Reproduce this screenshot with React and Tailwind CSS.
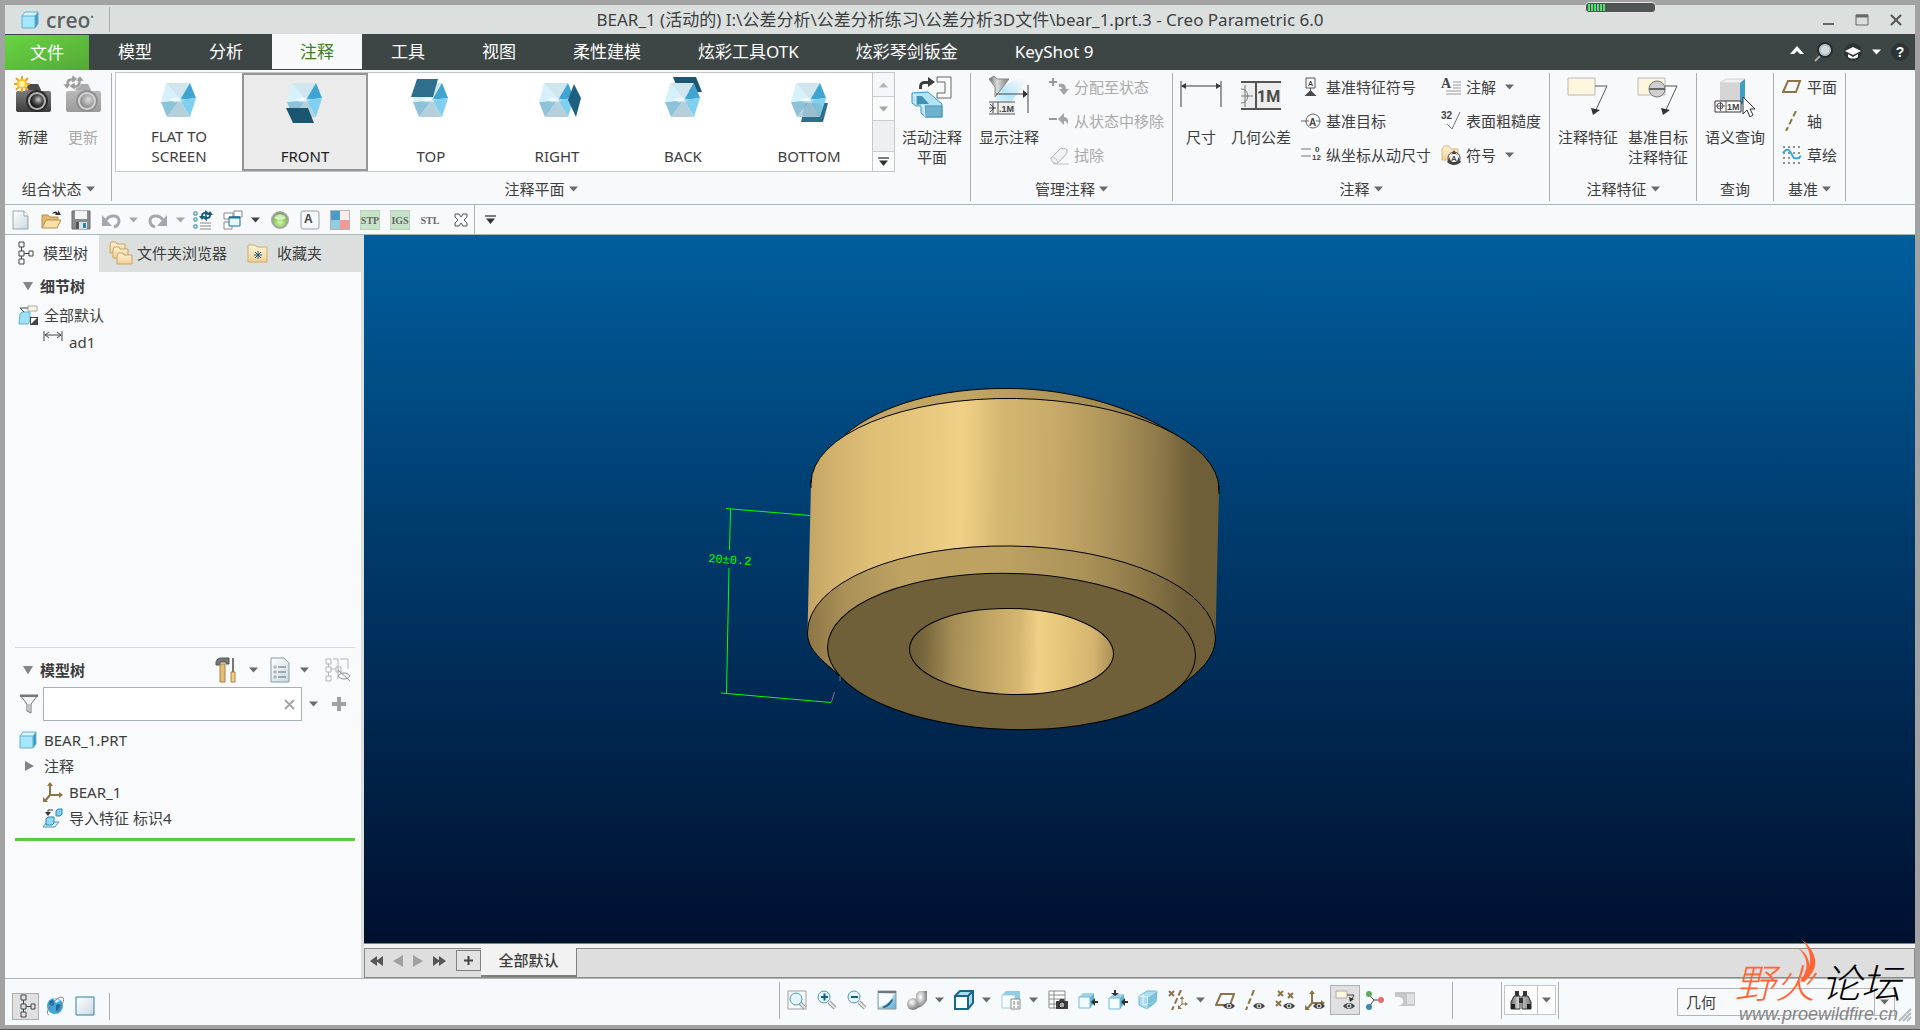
import React, { useState } from 'react';

/* ---------- small shared pieces ---------- */

const Svg = ({ w = 20, h = w, children, className = '' }) => (
  <svg width={w} height={h} viewBox={`0 0 ${w} ${h}`} fill="none" className={`shrink-0 ${className}`} aria-hidden="true">
    {children}
  </svg>
);

const Caret = ({ color = '#6b6b6b' }) => (
  <Svg w={9} h={6}><path d="M0 0.5h9L4.5 5.5z" fill={color} /></Svg>
);

const BarCaret = () => (
  <Svg w={11} h={9}><path d="M0 0h11v2H0z" fill="#7b7b7b" /><path d="M1 3.5h9L5.500 9z" fill="#333" /></Svg>
);

const IconButton = ({ label, children, className = '' }) => (
  <button aria-label={label} className={`flex shrink-0 items-center justify-center ${className}`}>{children}</button>
);

const Defs = () => (
  <svg width="0" height="0" className="absolute" aria-hidden="true">
    <defs>
      <linearGradient id="cam" x1="0" y1="0" x2="0" y2="1"><stop stopColor="#8a8a8a" /><stop offset="0.5" stopColor="#666" /><stop offset="1" stopColor="#3c3c3c" /></linearGradient>
      <linearGradient id="camOff" x1="0" y1="0" x2="0" y2="1"><stop stopColor="#c4c4c4" /><stop offset="1" stopColor="#9a9a9a" /></linearGradient>
      <radialGradient id="lens" cx="0.6" cy="0.4" r="0.6"><stop stopColor="#ccc" /><stop offset="0.5" stopColor="#555" /><stop offset="1" stopColor="#111" /></radialGradient>
      <radialGradient id="lensOff" cx="0.6" cy="0.4" r="0.6"><stop stopColor="#ddd" /><stop offset="0.6" stopColor="#aaa" /><stop offset="1" stopColor="#888" /></radialGradient>
      <radialGradient id="glow"><stop stopColor="#fff" /><stop offset="1" stopColor="#fff" stopOpacity="0" /></radialGradient>
      <radialGradient id="ball" cx="0.5" cy="0.65" r="0.6"><stop stopColor="#d6f5b0" /><stop offset="0.6" stopColor="#8fcf5e" /><stop offset="1" stopColor="#5f9a3a" /></radialGradient>
      <linearGradient id="metal" x1="0" y1="0" x2="1" y2="0"><stop stopColor="#666" /><stop offset="0.4" stopColor="#ddd" /><stop offset="1" stopColor="#777" /></linearGradient>
      <linearGradient id="folder" x1="0" y1="0" x2="0" y2="1"><stop stopColor="#fdf3d8" /><stop offset="1" stopColor="#f0cf94" /></linearGradient>
      <linearGradient id="paper" x1="0" y1="0" x2="1" y2="1"><stop stopColor="#fff" /><stop offset="1" stopColor="#c9d8e2" /></linearGradient>
      <linearGradient id="sky" x1="0" y1="0" x2="1" y2="1"><stop stopColor="#f2fafd" /><stop offset="1" stopColor="#5fb0d0" /></linearGradient>
      <linearGradient id="beam" x1="1" y1="0" x2="0" y2="1"><stop stopColor="#d6f1fb" stopOpacity="0" /><stop offset="0.6" stopColor="#b8e6f7" /><stop offset="1" stopColor="#e3f6fc" /></linearGradient>
      <radialGradient id="grayBall" cx="0.4" cy="0.35" r="0.7"><stop stopColor="#fff" /><stop offset="1" stopColor="#6f6f6f" /></radialGradient>
      <linearGradient id="body" gradientUnits="userSpaceOnUse" x1="808" y1="0" x2="1219" y2="6">
        <stop stopColor="#b89a5c" /><stop offset="0.03" stopColor="#c6a765" /><stop offset="0.09" stopColor="#d3b36e" /><stop offset="0.17" stopColor="#dfbf76" /><stop offset="0.28" stopColor="#e6c67c" />
        <stop offset="0.39" stopColor="#f0d086" /><stop offset="0.44" stopColor="#e3c47d" /><stop offset="0.48" stopColor="#d6b871" /><stop offset="0.61" stopColor="#c8ab69" />
        <stop offset="0.74" stopColor="#b0965c" /><stop offset="0.86" stopColor="#917c4b" /><stop offset="0.95" stopColor="#6f5f38" /><stop offset="1" stopColor="#6f5f38" />
      </linearGradient>
      <linearGradient id="chamfer" gradientUnits="userSpaceOnUse" x1="808" y1="660" x2="1216" y2="640">
        <stop stopColor="#8b7546" /><stop offset="0.1" stopColor="#ab9157" /><stop offset="0.25" stopColor="#bfa362" /><stop offset="0.5" stopColor="#bca162" />
        <stop offset="0.7" stopColor="#a89056" /><stop offset="0.83" stopColor="#8b7646" /><stop offset="0.93" stopColor="#6f5f38" /><stop offset="1" stopColor="#6f5f38" />
      </linearGradient>
      <linearGradient id="rim" gradientUnits="userSpaceOnUse" x1="846" y1="0" x2="1186" y2="0">
        <stop stopColor="#c4a765" /><stop offset="0.4" stopColor="#c0a463" /><stop offset="0.75" stopColor="#a38b53" /><stop offset="1" stopColor="#7b683e" />
      </linearGradient>
      <linearGradient id="bore" gradientUnits="userSpaceOnUse" x1="909" y1="0" x2="1114" y2="0">
        <stop stopColor="#6f5f38" /><stop offset="0.06" stopColor="#75643b" /><stop offset="0.22" stopColor="#a68e56" /><stop offset="0.4" stopColor="#c2a666" /><stop offset="0.54" stopColor="#d6b771" />
        <stop offset="0.63" stopColor="#f0d086" /><stop offset="0.75" stopColor="#e5c57a" /><stop offset="0.9" stopColor="#d4b46f" /><stop offset="1" stopColor="#a88d54" />
      </linearGradient>
    </defs>
  </svg>
);

/* ---------- icons ---------- */

const PartCube = ({ size = 18 }) => (
  <svg width={size} height={size} viewBox="0 0 18 18" fill="none" aria-hidden="true" className="shrink-0">
    <path d="M1 5l3-4h13l-3 4z" fill="#d9f4fd" /><path d="M14 5l3-4v12l-3 4z" fill="#3f97bf" /><path d="M1 5h13v12H1z" fill="#a5e6fb" />
    <path d="M1 5l3-4h13v12l-3 4H1zM1 5h13v12M14 5l3-4" stroke="#5fb3d3" />
  </svg>
);

const Camera = ({ off }) => (
  <Svg w={40} h={40}>
    <path d="M5 16h7l3-7h10l3 7h8a2 2 0 012 2v17a2 2 0 01-2 2H5a2 2 0 01-2-2V18a2 2 0 012-2z" fill={off ? 'url(#camOff)' : 'url(#cam)'} />
    <path d="M13 15l3-6h9l3 6z" fill={off ? '#aaa' : '#4a4a4a'} />
    <circle cx="24" cy="26" r="11" fill={off ? '#8f8f8f' : '#2b2b2b'} />
    <circle cx="24" cy="26" r="9" fill={off ? '#d2d2d2' : '#b5b5b5'} />
    <circle cx="24" cy="26" r="7" fill={off ? 'url(#lensOff)' : 'url(#lens)'} />
    {off ? (
      <path d="M3 9c0-4 2-6 6-6V0l6 4-6 4V6C7 6 6 7 6 9h2l-4 5-4-5zM18 6c0 5-2 7-6 7v2l-6-4 6-4v3c2 0 3-1 3-4h-3l5-5 4 5z" fill="#9d9d9d" stroke="#f8f9fb" strokeWidth="0.500" />
    ) : (
      <g stroke="#f5a11c" strokeWidth="2">
        <path d="M9 1v16M1 9h16M3 3l12 12M15 3L3 15" /><circle cx="9" cy="9" r="4" fill="#fff3a0" stroke="#f8c330" />
      </g>
    )}
  </Svg>
);

const PlaneCube = ({ side }) => (
  <Svg w={48} h={48}>
    {side === 'back' && <path d="M14 2h23l6 15H20z" fill="#1a5670" />}
    {side === 'bottom' && <path d="M20 28h23l-5 19H16z" fill="#2e6f8c" />}
    <path d="M11 8h24l-10 17z" fill="#cfe6ee" />
    <path d="M35 8l6 15-16 2z" fill="#3fa5d0" />
    <path d="M41 23l-6 19-10-17z" fill="#7fd0f0" />
    <path d="M35 42H12l13-17z" fill="#b5cfdb" />
    <path d="M12 42L6 27l19-2z" fill="#8cc3da" />
    <path d="M6 27l5-19 14 17z" fill="#d6f1fb" />
    <path d="M15 22h13l2 3-2 3H15l-2-3z" fill="url(#glow)" />
    {side === 'bottom' && <path d="M20 28h15l2 6-2 8H17z" fill="#7fb0c6" fillOpacity="0.5" />}
    {side === 'front' && <path d="M5 33h22l6 15H12z" fill="#1a5670" />}
    {side === 'top' && <path d="M10 4h21l-5 18H4z" fill="#2e6f8c" />}
    {side === 'right' && <path d="M41 9l7 14-5 19-8-17z" fill="#1f6080" />}
  </Svg>
);

const ActivePlaneIcon = () => (
  <Svg w={42} h={43}>
    <path d="M8 14c0-7 2-8 7-8h2V2l7 5-7 5V9h-3c-3 0-3 1-3 5z" fill="#3d3d3d" />
    <path d="M26 2h14v21H26v-5h8V7h-8z" fill="#fafafa" stroke="#666" />
    <path d="M1 18l16-1 14 12v13H14l-4-4v-7H5l-4-3z" fill="#b5e3f4" stroke="#3c97bf" />
    <path d="M5 21h6l7 8h-7l-6 1z" fill="#3f93b8" /><path d="M14 31h17v11H14z" fill="#72b1cd" stroke="#3c97bf" />
    <path d="M2 19l3 2v9M10 31h3l1 11" stroke="#e9f8fd" />
  </Svg>
);

const FrameText = ({ x, y, children, size = 9 }) => (
  <text x={x} y={y} fontSize={size} fontWeight="700" fill="#444" fontFamily="Liberation Sans, sans-serif">{children}</text>
);

const ShowAnnoIcon = () => (
  <Svg w={42} h={42}>
    <path d="M8 14L30 4h10L24 26 8 30z" fill="url(#beam)" />
    <path d="M1 4l5-3 3 3h12L7 22V12z" fill="url(#metal)" stroke="#888" />
    <path d="M8 19h29M40 10v28" stroke="#444" /><path d="M35 15l5 4-5 4z" fill="#333" />
    <path d="M1 27h26v12H1z" fill="#eee" /><path d="M1 27h26M1 39h26M10 27v12" stroke="#555" />
    <path d="M2 29l4 4-4 4M5 28v10M1 33h7" stroke="#444" /><FrameText x={11} y={37}>.1M</FrameText>
  </Svg>
);

const AssignIcon = () => (
  <Svg><path d="M0 5h8M4 1v8" stroke="#999" strokeWidth="2" /><path d="M10 7c5-1 7 1 7 5h3l-5 6-5-6h3c0-2-1-2-3-2z" fill="#a5a5a5" /></Svg>
);
const RemoveIcon = () => (
  <Svg><path d="M0 8h8" stroke="#999" strokeWidth="2" /><path d="M9 8l6-6v4c4 0 5 4 3 8 0-3-1-4-3-4v4z" fill="#a5a5a5" /></Svg>
);
const EraserIcon = () => (
  <Svg><path d="M4 19h16" stroke="#ddd" strokeWidth="2" /><path d="M2 13L11 4c2-1 6-1 7 1v3l-9 10c-4 1-7-1-7-5z" fill="#f2f2f2" stroke="#b5b5b5" /><path d="M2 13c2-1 6 0 7 5l9-10" stroke="#c4c4c4" /></Svg>
);
const DimIcon = () => (
  <Svg w={42} h={42}><path d="M1 6v26M41 6v26M2 11h38" stroke="#3b3b3b" /><path d="M1 11l5-3v6zM41 11l-5-3v6z" fill="#3b3b3b" /></Svg>
);
const GtolIcon = () => (
  <Svg w={42} h={42}>
    <path d="M1 7h40v27H1z" fill="#ededed" /><path d="M1 7h40M1 34h40" stroke="#555" strokeWidth="2" /><path d="M16 7v27" stroke="#555" strokeWidth="2" />
    <path d="M5 10v22M1 21h12M1 14c9 0 9 14 0 14" stroke="#777" strokeWidth="1" />
    <text x="17" y="27" fontSize="16" fontWeight="700" fill="#4a4a4a" fontFamily="Roboto, sans-serif">1M</text>
  </Svg>
);
const DatumFeatureIcon = () => (
  <Svg><path d="M5 1h9v10H5zM9.500 11v5" stroke="#555" /><FrameText x={7} y={9} size={7}>A</FrameText><path d="M9.500 13l6 6h-12z" fill="#4a4a4a" /></Svg>
);
const DatumTargetIcon = () => (
  <Svg><circle cx="12" cy="10" r="7" stroke="#666" /><path d="M0 10h19" stroke="#666" /><path d="M8 7h7v9H8z" fill="#fff" /><FrameText x={8} y={15} size={10}>A</FrameText></Svg>
);
const OrdinateIcon = () => (
  <Svg><path d="M0 4h10M0 11h10" stroke="#777" /><FrameText x={14} y={7} size={8}>0</FrameText><FrameText x={11} y={15} size={8}>12</FrameText></Svg>
);
const NoteIcon = () => (
  <Svg><text x="0" y="11" fontSize="14" fontWeight="700" fill="#444" fontFamily="Liberation Serif, serif">A</text><path d="M12 5h8M12 8h8M12 11h8M5 14h15M5 17h15" stroke="#999" strokeWidth="1" /></Svg>
);
const RoughIcon = () => (
  <Svg><FrameText x={0} y={8} size={10}>32</FrameText><path d="M6 13l5 5 8-17" stroke="#777" /></Svg>
);
const SymbolIcon = () => (
  <Svg><path d="M1 4l2-3h5l2 3h7v11H1z" fill="url(#folder)" stroke="#d9b778" /><circle cx="13" cy="13" r="6" fill="#fff" stroke="#444" /><path d="M13 5l7 12c-4 4-10 4-14 0z" fill="#444" /><circle cx="13" cy="13" r="4" fill="#fff" /><FrameText x={10} y={16} size={8}>A</FrameText></Svg>
);
const LeaderIcon = ({ target }) => (
  <Svg w={42} h={42}>
    <path d="M1 3h27v17H1z" fill="#fff6e0" stroke="#b8b8b8" strokeWidth="1" /><path d="M28 11h12L28 37" stroke="#555" />
    <path d="M24 33l9 2-7 5z" fill="#333" />
    {target && <g><circle cx="20" cy="14" r="8" fill="#cfcfcf" stroke="#777" strokeWidth="1" /><path d="M12 14h16" stroke="#666" strokeWidth="2" /></g>}
  </Svg>
);
const QueryIcon = () => (
  <Svg w={42} h={42}>
    <path d="M6 8l6-4h19l-5 4z" fill="#f2f2f2" stroke="#ccc" /><path d="M26 8l5-4v22l-5 5z" fill="#3d9fc6" /><path d="M6 8h20v20H6z" fill="#d5d5d5" />
    <path d="M1 26h26v11H1z" fill="#fff" stroke="#333" /><path d="M12 26v11M2 31h9M6.500 27v9" stroke="#555" /><circle cx="6" cy="31" r="3" stroke="#555" /><FrameText x={13} y={35} size={9}>1M</FrameText>
    <path d="M29 22v17l4-4 3 7 3-2-3-6h5z" fill="#fff" stroke="#333" />
  </Svg>
);
const PlaneIcon = ({ eye }) => (
  <Svg><path d={eye ? 'M6 4h13l-4 11H1z' : 'M6 4h12l-4 11H1z'} stroke="#8b7445" strokeWidth="2" />{eye && <Eye />}</Svg>
);
const Eye = () => (
  <g><path d="M8 16c3-4 9-4 12 0-3 4-9 4-12 0z" fill="#444" /><circle cx="14" cy="16" r="2" fill="#444" stroke="#fff" /></g>
);
const AxisIcon = ({ eye }) => (
  <Svg><path d={eye ? 'M9 0L1 20' : 'M14 0L4 20'} stroke="#8b7445" strokeWidth="2" strokeDasharray="6 3" />{eye && <Eye />}</Svg>
);
const SketchIcon = () => (
  <Svg><path d="M1 2h18M1 8h18M1 13h18M1 18h18" stroke="#8f8f8f" strokeWidth="2" strokeDasharray="2 3" /><path d="M1 8c4-6 7-3 9 2s6 4 9 1" stroke="#35aadc" strokeWidth="2" /></Svg>
);

/* quick access bar */
const NewDocIcon = () => <Svg><path d="M2 1h11l4 5v13H2z" fill="url(#paper)" stroke="#9aa3aa" /><path d="M13 1v5h4" fill="#fff" stroke="#9aa3aa" /></Svg>;
const OpenIcon = () => (
  <Svg><path d="M1 18V5h6l2 2h8v4H5z" fill="#e0b972" stroke="#b98f4a" /><path d="M1 18l4-8h15l-4 8z" fill="#f8dfaa" stroke="#b98f4a" /><path d="M11 4c2-3 4-3 6-1V0l3 5h-6l1-1c-1-1-2-1-4 0z" fill="#333" /></Svg>
);
const SaveIcon = () => (
  <Svg><path d="M1 1h18v18H1z" fill="#8a8a8a" stroke="#6d6d6d" /><path d="M4 1h12v8H4z" fill="#f4f4f4" /><path d="M5 12h11v7H5z" fill="#d5e3ea" /><path d="M12 13h3v5h-3z" fill="#2e86ad" /><path d="M5 12h3v7H5z" fill="#555" /></Svg>
);
const UndoIcon = ({ flip }) => (
  <Svg className={flip ? '-scale-x-100' : ''}><path d="M5 10c4-6 13-5 13 1 0 3-2 5-5 6" stroke="#a5a8aa" strokeWidth="3" /><path d="M1 5v11h10z" fill="#a5a8aa" /></Svg>
);
const RegenIcon = () => (
  <Svg>
    <path d="M1 2h3v3H1zM1 8h3v3H1zM1 15h3v3H1z" stroke="#2e86ad" /><path d="M7 13h11M7 16h11M7 19h11" stroke="#888" strokeWidth="1" />
    <path d="M6 6h2c0-3 2-4 4-4V0l4 3-4 3V4c-1 0-2 0-2 2h2l-3 4zM20 5h-2c0 3-2 4-4 4v2l-4-3 4-3v2c1 0 2 0 2-2h-2l3-4z" fill="#1c5b7c" />
  </Svg>
);
const WindowsIcon = () => (
  <Svg><path d="M1 3h9v6H1zM11 1h8v6h-8zM1 12h8v7H1z" fill="#fff" stroke="#888" /><path d="M6 7h11v9H6z" fill="#e8f7fd" stroke="#1d6f96" /><path d="M6 7.500h11" stroke="#1d6f96" strokeWidth="2" /></Svg>
);
const BallIcon = () => <Svg><circle cx="10" cy="10" r="8" fill="url(#ball)" stroke="#a5a5a5" strokeWidth="2" /><path d="M4 8c2-5 10-5 12 0-3 2-9 2-12 0z" fill="#fff" fillOpacity="0.6" /></Svg>;
const LetterAIcon = () => <Svg><rect x="1" y="1" width="18" height="18" rx="2" fill="#f4f8fb" stroke="#9aa3aa" /><FrameText x={4} y={13} size={12}>A</FrameText></Svg>;
const QuadIcon = () => (
  <Svg><path d="M0 0h20v20H0z" fill="#b3b3b3" /><path d="M1 1h9v9H1z" fill="#4a9cc6" /><path d="M10 1h9v9h-9z" fill="#fdecec" /><path d="M1 10h9v9H1z" fill="#93cbe4" /><path d="M10 10h9v9h-9z" fill="#f19a93" /></Svg>
);
const FormatIcon = ({ name, green }) => (
  <Svg>{green && <path d="M0 0h20v20H0z" fill="#c6e3c8" stroke="#a9c9ab" />}<text x="10" y="14" textAnchor="middle" fontSize="10" fontWeight="700" fill="#666" fontFamily="Liberation Serif, serif">{name}</text></Svg>
);
const CloseWinIcon = () => (
  <Svg w={14} h={14}><path d="M1 1h4l2 3 2-3h4v3l-3 3 3 3v3H9l-2-3-2 3H1v-3l3-3-3-3z" stroke="#555" /></Svg>
);

/* navigator */
const TreeIcon = () => (
  <Svg w={18} h={24}><path d="M2 1h5v5H2zM2 10h5v5H2zM2 18h5v5H2zM12 10h4v5h-4z" stroke="#444" /><path d="M4.500 6v4M4.500 15v3M7 12.500h5" stroke="#444" /></Svg>
);
const Folder = ({ x, y }) => <path d={`M${x} ${y + 3}l1-3h5l1 2h8v9H${x}z`} fill="url(#folder)" stroke="#c9a463" />;
const FoldersIcon = () => <Svg w={24} h={24}><Folder x={1} y={1} /><Folder x={4} y={6} /><Folder x={8} y={12} /></Svg>;
const FavIcon = () => (
  <Svg w={22} h={20}><path d="M1 5V2h7l2 2h10v15H1z" fill="url(#folder)" stroke="#d0ab69" /><path d="M11 8v8M7 12h8M8 9l6 6M14 9l-6 6" stroke="#1f6080" /></Svg>
);
const CombStateIcon = () => (
  <Svg><path d="M2 9l2-2h8v9l-2 3H1z" fill="#9fdff7" stroke="#5fb3d3" /><path d="M10 1h9v5h-9z" fill="#fff6e0" stroke="#aaa" /><path d="M10 3H2l4 4" stroke="#444" /><path d="M12 12h8v8h-8z" fill="#444" /><path d="M13 13h6l-6 6z" fill="#fff" /></Svg>
);
const DimSmallIcon = () => <Svg w={20} h={12}><path d="M1 1v10M19 1v10M2 5h16M6 2L2 5l4 3M14 2l4 3-4 3" stroke="#444" /></Svg>;
const ToolsIcon = () => (
  <Svg w={22} h={26}><path d="M1 5c1-3 3-4 6-4h7v6h-3V5H5v3H1z" fill="#777" stroke="#555" /><path d="M5 7h5v18H5z" fill="#e4bd78" stroke="#a98347" /><path d="M18 1v14" stroke="#777" strokeWidth="2" /><path d="M16 15h4v10h-4z" fill="#f0cf8d" stroke="#a98347" /></Svg>
);
const ListDocIcon = () => (
  <Svg w={20} h={26}><path d="M1 1h13l5 5v19H1z" fill="url(#paper)" stroke="#8d9aa3" /><path d="M8 10h8M8 15h8M8 20h8" stroke="#666" strokeWidth="1" /><path d="M4 9h2v2H4zM4 14h2v2H4zM4 19h2v2H4z" stroke="#666" strokeWidth="0.500" /></Svg>
);
const HiddenTreeIcon = () => (
  <Svg w={26} h={26}><path d="M1 2h5v5H1zM1 10h5v5H1zM1 19h5v5H1zM11 10h5v5h-5zM8 2h5v20M15 2h8v10M3.500 7v3M3.500 15v4M6 12h5" stroke="#b5b5b5" /><path d="M13 19c3-4 9-4 12 0-3 4-9 4-12 0zM13 13l12 11" stroke="#8c8c8c" /></Svg>
);
const FunnelIcon = () => <Svg w={20} h={20}><path d="M1 1h18l-7 9v9l-4-2v-7z" fill="#f2f2f2" stroke="#777" strokeWidth="1" /><path d="M1 2h18" stroke="#777" strokeWidth="2" /><path d="M10 10v8" stroke="#999" strokeWidth="1" /></Svg>;
const CsysIcon = ({ eye }) => (
  <Svg><path d="M7 1v12h12M7 13l-5 6" stroke="#8b7445" strokeWidth="2" /><path d="M4 4l3-4 3 4zM16 10l4 3-4 3zM0 15v5h5z" fill="#8b7445" />{eye && <Eye />}</Svg>
);
const ImportIcon = () => (
  <Svg><path d="M13 3l2-2h4v5l-2 2h-4z" fill="#7fd0f0" stroke="#2f86ad" /><path d="M10 2H5v3" stroke="#333" /><path d="M2 4h6L5 8z" fill="#333" /><path d="M0 19l4-5h12l-4 5z" fill="#d8f1fa" stroke="#3f97bf" /><path d="M3 11l2-2h6v6l-2 2H3z" fill="#8edaf5" stroke="#2f86ad" /></Svg>
);
const GlobeIcon = () => (
  <Svg><circle cx="10" cy="10" r="8" fill="#3fa5d8" /><path d="M5 5c3-2 5 0 4 3s-4 2-5 0zM11 9c4-2 6 1 4 4s-3 4-4 1z" fill="#1c6a9a" /><path d="M8 2c3 0 6 1 7 3l-4 2z" fill="#c9eefb" /><path d="M4 19C-2 17 10 1 17 1c4 1 0 10-6 15" stroke="#888" /></Svg>
);

/* graphics bar */
const Lens = ({ kind }) => (
  <Svg>
    {kind === 'fit' && <path d="M1 1h18v18H1z" fill="#fafafa" stroke="#9f9f9f" />}
    <path d="M12 12l6 6" stroke="#999" strokeWidth="4" /><path d="M12 12l6 6" stroke="#e5e5e5" strokeWidth="2" />
    <circle cx={kind === 'fit' ? 9 : 7} cy={kind === 'fit' ? 9 : 7} r="6" fill="#e4f5fc" stroke="#4f94b4" />
    {kind === 'in' && <path d="M4 7h7M7.500 3.500v7" stroke="#155d85" strokeWidth="2" />}
    {kind === 'out' && <path d="M4 7h7" stroke="#155d85" strokeWidth="2" />}
  </Svg>
);
const RepaintIcon = () => <Svg><path d="M1 1h18v18H1z" fill="url(#sky)" stroke="#8a9aa2" /><path d="M1 2h18" stroke="#777" strokeWidth="2" /><path d="M2 4h15c-3 7-8 11-15 13z" fill="#f7fcfe" /><path d="M5 17c4-1 7-4 10-8l1 1c-2 4-5 7-9 8z" fill="#1f6080" /></Svg>;
const ShadeIcon = () => <Svg><circle cx="6" cy="14" r="6" fill="url(#grayBall)" /><path d="M9 4l3-3h8v9c-2 4-6 8-10 8 3-3 1-7-1-8z" fill="url(#grayBall)" /></Svg>;
const StyleCubeIcon = () => <Svg><path d="M1 6l5-5h13v12l-5 6H1z" fill="#a9dcf0" /><path d="M1 6h13v13H1z" fill="#f4fcff" /><path d="M1 6l5-5h13v12l-5 6H1zM1 6h13v13M14 6l5-5" stroke="#1c6488" strokeWidth="2" /></Svg>;
const LightCube = ({ x = 1, y = 5 }) => (
  <g><path d={`M${x} ${y}l4-4h11l-4 4z`} fill="#9fd3ea" /><path d={`M${x} ${y}h11v11H${x}z`} fill="#f2fbfe" stroke="#74b9d6" /><path d={`M${x + 11} ${y}l4-4v10l-4 5z`} fill="#5fb3d3" /></g>
);
const SavedViewIcon = () => <Svg><path d="M1 5l4-4h14v11l-4 6H1z" fill="#8fcbe5" /><path d="M1 5h13v13H1z" fill="#f6fcfe" stroke="#a5cfe0" /><path d="M10 9h9v10h-9z" fill="#fff" stroke="#888" /><path d="M12 12h2M16 12h2M12 14h2M16 14h2M12 17h2M16 17h2" stroke="#777" /></Svg>;
const ViewMgrIcon = () => <Svg><path d="M1 1h16v17H1z" fill="#fff" stroke="#888" /><path d="M1 5h16M1 9h16M1 14h16M6 1v17" stroke="#888" /><path d="M8 11h3l1-2h4l1 2h3v8H8z" fill="#3f3f3f" /><circle cx="14" cy="15" r="3" fill="#aaa" stroke="#222" /></Svg>;
const CubeArrow1 = () => <Svg><LightCube x={1} y={7} /><path d="M20 12h-3" stroke="#333" strokeWidth="2" /><path d="M13 12l4-4v8z" fill="#333" /></Svg>;
const CubeArrow2 = () => <Svg><LightCube x={1} y={8} /><path d="M20 12h-3M7 0v3" stroke="#333" strokeWidth="2" /><path d="M13 12l4-4v8zM7 6L3 3h8z" fill="#333" /></Svg>;
const PerspIcon = () => <Svg><path d="M1 6l8-5h10l-1 11-9 7-8-4z" fill="#a9dcf0" stroke="#6fb8d5" /><path d="M1 6l9 1-1 12M10 7l9-6M5 4v11l13-3" stroke="#e9f8fd" /><path d="M10 7l9-6-1 11-9 7z" fill="#5fb0d0" fillOpacity="0.6" /></Svg>;
const DatumFilterIcon = () => <Svg><path d="M1 1l5 5M6 1L1 6" stroke="#8b7445" strokeWidth="2" /><path d="M13 0L4 20" stroke="#8b7445" strokeWidth="2" strokeDasharray="6 3" /><path d="M14 8v6h4M14 14l-3 3" stroke="#8b7445" /><path d="M12 9l2-3 2 3zM17 12l3 2-3 2zM10 15v4h4z" fill="#8b7445" /></Svg>;
const PointEyeIcon = () => <Svg><path d="M3 1l5 5M8 1L3 6M13 3l5 5M18 3l-5 5M1 11l5 5M6 11l-5 5" stroke="#8b7445" strokeWidth="2" /><Eye /></Svg>;
const AnnoEyeIcon = () => <Svg><path d="M1 1h11v7H1z" fill="#fff6e0" stroke="#aaa" /><path d="M12 5h7l-2 4" stroke="#444" /><path d="M14 7l1 5 4-3z" fill="#333" /><Eye /></Svg>;
const SpinIcon = () => <Svg><path d="M4 5l5 5-5 7M9 10h7" stroke="#444" /><circle cx="4" cy="4" r="3" fill="#62a85e" /><circle cx="4" cy="17" r="3" fill="#3b88b2" /><circle cx="16" cy="10" r="3" fill="#e4706a" /></Svg>;
const GreyPartIcon = () => <Svg><path d="M0 2h20v14H3c7-1 7-9 0-9H0z" fill="#c4c7c9" /><path d="M12 4h7v10h-7z" fill="#dfe1e2" /></Svg>;
const BinocularIcon = () => (
  <Svg w={22} h={20}><path d="M5 1h4v5H5zM13 1h4v5h-4z" fill="#333" /><path d="M4 6h6v13H1v-7zM12 6h6l3 6v7h-9z" fill="url(#metal)" stroke="#333" /><path d="M9 8h4v5H9z" fill="#333" /><path d="M1 14h4v5H1zM17 14h4v5h-4z" fill="#222" /></Svg>
);

/* ---------- window chrome ---------- */

const TitleBar = () => (
  <header className="flex h-[29px] items-center bg-[#dbe0df]">
    <div className="flex w-[260px] items-center self-stretch pl-4">
      <PartCube size={18} />
      <span className="w-[70px] pl-[7px] font-['Open_Sans',sans-serif] text-[21px] leading-6 font-semibold text-[#5b6162]">creo<span className="align-super text-[8px] leading-none">•</span></span>
      <i className="h-[25px] w-px bg-[#a9afaf]" />
    </div>
    <h1 className="flex-1 truncate text-center text-[17px] leading-6 text-[#3d4142]">BEAR_1 (活动的) I:\公差分析\公差分析练习\公差分析3D文件\bear_1.prt.3 - Creo Parametric 6.0</h1>
    <div className="flex w-[260px] items-center justify-end gap-5 pr-3">
      <IconButton label="最小化"><Svg w={14} h={14}><path d="M2 11h11" stroke="#666" strokeWidth="2" /></Svg></IconButton>
      <IconButton label="最大化"><Svg w={14} h={14}><path d="M1 2h12v10H1z" stroke="#666" /><path d="M1 3h12" stroke="#666" strokeWidth="3" /></Svg></IconButton>
      <IconButton label="关闭"><Svg w={14} h={14}><path d="M2 2l10 10M12 2L2 12" stroke="#555" strokeWidth="2" /></Svg></IconButton>
    </div>
  </header>
);

const tabs = ['模型', '分析', '注释', '工具', '视图', '柔性建模', '炫彩工具OTK', '炫彩琴剑钣金', 'KeyShot 9'];

const TabBar = ({ active, onPick }) => (
  <nav className="flex h-9 gap-px bg-[#3d4645] text-[17px] leading-6 text-white">
    <button className="mt-px w-[84px] bg-linear-to-br from-[#67d543] to-[#55a836]">文件</button>
    {tabs.map((t) => (
      <button
        key={t}
        onClick={() => onPick(t)}
        className={`shrink-0 px-7 ${t === active ? 'mb-px bg-[#f8f9fb] text-[#3f7d1f]' : ''}`}
      >
        {t}
      </button>
    ))}
    <div className="flex flex-1 items-center justify-end gap-[10px] pr-1.5">
      <IconButton label="折叠"><Svg w={14} h={14}><path d="M0 9l7-8 7 8h-4L7 6 4 9z" fill="#fff" /></Svg></IconButton>
      <IconButton label="搜索"><Svg w={20} h={20}><path d="M7 13l-6 6" stroke="#aaa" strokeWidth="2" /><circle cx="11" cy="8" r="7" fill="#cfdade" stroke="#2a2a2a" strokeWidth="2" /><circle cx="11" cy="8" r="5" stroke="#9fb0b6" /></Svg></IconButton>
      <IconButton label="学习"><Svg w={18} h={18}><circle cx="9" cy="9" r="9" fill="#2e3333" /><path d="M1 8l8-4 8 4-8 4z" fill="#fff" /><path d="M4 11v3c3 2 7 2 10 0v-3l-5 3z" fill="#fff" /></Svg></IconButton>
      <Caret color="#fff" />
      <IconButton label="帮助"><Svg w={18} h={20}><circle cx="9" cy="10" r="9" fill="#2e3333" /><text x="9" y="15" textAnchor="middle" fontSize="14" fontWeight="700" fill="#fff" fontFamily="Liberation Sans, sans-serif">?</text></Svg></IconButton>
    </div>
  </nav>
);

/* ---------- ribbon ---------- */

const Group = ({ label, caret = true, className, children }) => (
  <>
    <section className={`flex shrink-0 flex-col ${className}`}>
      <div className="flex h-[106px]">{children}</div>
      <button className="flex h-[26px] items-center justify-center gap-1">{label}{caret && <Caret />}</button>
    </section>
    <i className="my-[3px] w-px shrink-0 bg-[#a9afb1]" />
  </>
);

const BigButton = ({ icon, lines, off, className }) => (
  <button className={`flex shrink-0 flex-col items-center pt-[5px] ${off ? 'text-[#a9a9a9]' : ''} ${className}`}>
    <span className="flex h-[52px] items-start">{icon}</span>
    {lines.map((l) => <span key={l} className="leading-5">{l}</span>)}
  </button>
);

const SmallColumn = ({ items, off, className = '' }) => (
  <div className={`flex shrink-0 flex-col ${className}`}>
    {items.map(([icon, text, caret]) => (
      <button key={text} className={`flex h-[34px] items-center gap-[5px] ${off ? 'text-[#a9a9a9]' : ''}`}>
        {icon}<span>{text}</span>{caret && <span className="pl-1"><Caret /></span>}
      </button>
    ))}
  </div>
);

const planes = [
  { name: 'FLAT TO SCREEN', side: null },
  { name: 'FRONT', side: 'front' },
  { name: 'TOP', side: 'top' },
  { name: 'RIGHT', side: 'right' },
  { name: 'BACK', side: 'back' },
  { name: 'BOTTOM', side: 'bottom' },
];

const Gallery = () => {
  const [picked, setPicked] = useState('FRONT');
  return (
    <div className="mt-[2px] ml-[3px] flex h-[100px] border border-[#c3c7ca] bg-white">
      {planes.map(({ name, side }) => (
        <button
          key={name}
          onClick={() => setPicked(name)}
          className={`flex w-[126px] flex-col items-center justify-between border-2 pb-[3px] ${picked === name ? 'border-[#959595] bg-[#ebebeb] text-[#222]' : 'border-transparent'}`}
        >
          <PlaneCube side={side} />
          <span className="w-[64px] shrink-0 text-center leading-5">{name}</span>
        </button>
      ))}
      <div className="flex w-[22px] flex-col border-l border-[#c3c7ca] bg-[#edeff1]">
        <IconButton label="上一行" className="h-6 border-b border-[#c9cdd0] bg-[#f5f6f7]"><Svg w={9} h={6}><path d="M0 5.500h9L4.500 0.500z" fill="#b5b5b5" /></Svg></IconButton>
        <IconButton label="下一行" className="h-6 border-b border-[#c9cdd0] bg-[#fafbfb]"><Caret color="#a5a5a5" /></IconButton>
        <IconButton label="更多" className="mt-auto h-5 border-t border-[#c9cdd0] bg-[#fafbfb]"><BarCaret /></IconButton>
      </div>
    </div>
  );
};

const Ribbon = () => (
  <div className="flex h-[135px] overflow-hidden border-b border-[#a9b8b8] bg-[#f8f9fb]">
    <Group label="组合状态" className="w-[106px]">
      <BigButton icon={<Camera />} lines={['新建']} className="ml-[3px] w-[50px]" />
      <BigButton icon={<Camera off />} lines={['更新']} off className="w-[50px]" />
    </Group>
    <Group label="注释平面" className="w-[858px]">
      <Gallery />
      <BigButton icon={<ActivePlaneIcon />} lines={['活动注释', '平面']} className="w-[74px]" />
    </Group>
    <Group label="管理注释" className="w-[201px]">
      <BigButton icon={<ShowAnnoIcon />} lines={['显示注释']} className="w-[76px]" />
      <SmallColumn off className="pl-[2px]" items={[[<AssignIcon />, '分配至状态'], [<RemoveIcon />, '从状态中移除'], [<EraserIcon />, '拭除']]} />
    </Group>
    <Group label="注释" className="w-[376px]">
      <BigButton icon={<DimIcon />} lines={['尺寸']} className="w-14" />
      <BigButton icon={<GtolIcon />} lines={['几何公差']} className="w-16" />
      <SmallColumn className="pl-2" items={[[<DatumFeatureIcon />, '基准特征符号'], [<DatumTargetIcon />, '基准目标'], [<OrdinateIcon />, '纵坐标从动尺寸']]} />
      <SmallColumn className="pl-[10px]" items={[[<NoteIcon />, '注解', true], [<RoughIcon />, '表面粗糙度'], [<SymbolIcon />, '符号', true]]} />
    </Group>
    <Group label="注释特征" className="w-[146px]">
      <BigButton icon={<LeaderIcon />} lines={['注释特征']} className="w-[76px]" />
      <BigButton icon={<LeaderIcon target />} lines={['基准目标', '注释特征']} className="w-16" />
    </Group>
    <Group label="查询" caret={false} className="w-[76px]">
      <BigButton icon={<QueryIcon />} lines={['语义查询']} className="w-[76px]" />
    </Group>
    <Group label="基准" className="w-[71px]">
      <SmallColumn className="pl-2" items={[[<PlaneIcon />, '平面'], [<AxisIcon />, '轴'], [<SketchIcon />, '草绘']]} />
    </Group>
  </div>
);

const QuickBar = () => (
  <div className="flex h-[30px] items-center gap-[10px] border-b border-[#a9b8b8] bg-[#f8f9fb] pl-[6px]">
    <IconButton label="新建"><NewDocIcon /></IconButton>
    <IconButton label="打开"><OpenIcon /></IconButton>
    <IconButton label="保存"><SaveIcon /></IconButton>
    <IconButton label="撤消" className="gap-2"><UndoIcon /><Caret color="#a5a8aa" /></IconButton>
    <IconButton label="重做" className="gap-2"><UndoIcon flip /><Caret color="#a5a8aa" /></IconButton>
    <IconButton label="重新生成" className="-ml-[2px]"><RegenIcon /></IconButton>
    <IconButton label="窗口" className="gap-2"><WindowsIcon /><Caret color="#444" /></IconButton>
    <IconButton label="外观"><BallIcon /></IconButton>
    <IconButton label="文本"><LetterAIcon /></IconButton>
    <IconButton label="颜色"><QuadIcon /></IconButton>
    <IconButton label="STP"><FormatIcon name="STP" green /></IconButton>
    <IconButton label="IGS"><FormatIcon name="IGS" green /></IconButton>
    <IconButton label="STL"><FormatIcon name="STL" /></IconButton>
    <IconButton label="关闭窗口" className="pl-1"><CloseWinIcon /></IconButton>
    <i className="-ml-1 w-px self-stretch bg-[#a9b8b8]" />
    <IconButton label="自定义"><BarCaret /></IconButton>
  </div>
);

/* ---------- navigator ---------- */

const Twisty = () => <Svg w={12} h={10}><path d="M1 1h10L6 9.500z" fill="#858585" /></Svg>;

const Navigator = () => (
  <aside className="flex w-[359px] shrink-0 flex-col border-r-[3px] border-[#dbe0df] bg-[#f8fafc]">
    <div className="flex h-[37px] items-center bg-[#dbe0df]">
      <button className="flex h-full w-[94px] items-center gap-2 bg-[#f8fafc] pb-px pl-3"><TreeIcon />模型树</button>
      <button className="flex items-center gap-1 pb-px pl-[10px]"><FoldersIcon />文件夹浏览器</button>
      <button className="flex items-center gap-2 pb-px pl-5"><FavIcon />收藏夹</button>
    </div>
    <div className="flex min-h-0 flex-1 flex-col pr-[6px] pl-[10px]">
      <h2 className="flex h-7 items-center gap-[6px] pl-[7px] font-bold"><Twisty />细节树</h2>
      <ul className="h-[348px] border-b border-[#d6dcdd]">
        <li className="flex h-[30px] items-center gap-[6px] pl-[3px]"><CombStateIcon />全部默认</li>
        <li className="flex h-[23px] items-center gap-[6px] pl-7"><span className="self-start"><DimSmallIcon /></span>ad1</li>
      </ul>
      <div className="flex h-[39px] items-center pt-1">
        <h2 className="flex flex-1 items-center gap-[6px] pl-[7px] font-bold"><Twisty />模型树</h2>
        <IconButton label="设置" className="gap-3"><ToolsIcon /><Caret /></IconButton>
        <IconButton label="显示" className="ml-3 gap-[10px]"><ListDocIcon /><Caret /></IconButton>
        <IconButton label="隐藏" className="mr-1 ml-4"><HiddenTreeIcon /></IconButton>
      </div>
      <div className="flex h-[34px] items-center pl-1">
        <FunnelIcon />
        <label className="ml-1 flex h-[34px] flex-1 items-center border border-[#a5b2b3] bg-white pr-[6px]">
          <input type="text" aria-label="过滤" className="h-full min-w-0 flex-1 bg-transparent px-2 outline-none" />
          <Svg w={11} h={11}><path d="M1 1l9 9M10 1l-9 9" stroke="#a5a5a5" strokeWidth="2" /></Svg>
        </label>
        <IconButton label="过滤选项" className="ml-[7px]"><Caret /></IconButton>
        <IconButton label="添加" className="mr-[9px] ml-[14px]"><Svg w={14} h={14}><path d="M7 0v14M0 7h14" stroke="#a0a0a0" strokeWidth="4" /></Svg></IconButton>
      </div>
      <ul className="border-b-3 border-[#62c645] pt-[6px] pb-[7px]">
        <li className="flex h-[26px] items-center gap-[7px] pl-1"><PartCube size={18} />BEAR_1.PRT</li>
        <li className="flex h-[26px] items-center gap-[10px] pl-[10px]"><Svg w={9} h={12}><path d="M0 1l9 5-9 5z" fill="#858585" /></Svg>注释</li>
        <li className="flex h-[26px] items-center gap-[6px] pl-7"><CsysIcon />BEAR_1</li>
        <li className="flex h-[26px] items-center gap-[6px] pl-7"><ImportIcon />导入特征 标识4</li>
      </ul>
    </div>
  </aside>
);

/* ---------- model view ---------- */

const ModelView = () => (
  <svg className="min-h-0 w-full flex-1" viewBox="364 235 1551 708" fill="none" role="img" aria-label="BEAR_1">
    <path d="M846 434C880 405 940 388 1007 388.500 1075 388 1145 411 1186 442L1015 480z" fill="url(#rim)" stroke="#000" />
    <path d="M807.500 632L811 483A204 88 1 0 1 1219 490L1215.500 638z" fill="url(#body)" />
    <path d="M807.500 632A204 89 1 0 1 1215.500 638C1215 660 1197 673 1179 687L1011 700 842 677C822 660 807 650 807.500 632z" fill="url(#chamfer)" />
    <g stroke="#000">
      <path d="M811 483A204 88 1 0 1 1219 490" />
      <path d="M807.500 632A204 89 1 0 1 1215.500 638" />
      <path d="M807.500 632C807 650 822 660 842 678M1215.500 638C1215 660 1197 673 1179 687" />
      <path d="M811 480v8M1219 486v8" />
      <ellipse cx="1011.500" cy="651.500" rx="184" ry="78" transform="rotate(1.500 1011.500 651.500)" fill="#6f603a" />
      <ellipse cx="1011.500" cy="651.500" rx="102" ry="43" transform="rotate(1.500 1011.500 651.500)" fill="url(#bore)" />
    </g>
    <path d="M726 508.500L810 515.500M730.500 509L729.500 550M729 568L726.500 693M721 693L831 702.500" stroke="#00ff00" />
    <path d="M831.500 702l3-10M840 676v5" stroke="#777" />
    <text x="708" y="562" fontSize="12" fill="#00ff00" fontFamily="Liberation Mono, monospace" transform="rotate(4 708 562)">20±0.2</text>
  </svg>
);

const SheetBar = () => (
  <div className="flex h-[35px] flex-col border-t border-[#808080] bg-[#f2f2f2] pt-1">
    <div className="flex h-[30px] items-stretch border border-[#8a8a8a] bg-[#dedede]">
      <IconButton label="首页" className="ml-[5px] pb-1"><Svg w={13} h={10}><path d="M7 0v10L0 5zM13 0v10L6 5z" fill="#555" /></Svg></IconButton>
      <IconButton label="上一页" className="ml-[10px] pb-1"><Svg w={10} h={12}><path d="M10 0v12L0 6z" fill="#a0a0a0" /></Svg></IconButton>
      <IconButton label="下一页" className="ml-[10px] pb-1"><Svg w={10} h={12}><path d="M0 0v12l10-6z" fill="#a0a0a0" /></Svg></IconButton>
      <IconButton label="末页" className="ml-[10px] pb-1"><Svg w={13} h={10}><path d="M6 0v10l7-5zM0 0v10l7-5z" fill="#555" /></Svg></IconButton>
      <IconButton label="新建页" className="mt-px mb-[6px] ml-[10px] w-[25px] border border-[#808080] bg-[#e3e3e3]"><Svg w={9} h={9}><path d="M4.500 0v9M0 4.500h9" stroke="#444" strokeWidth="2" /></Svg></IconButton>
      <button className="-mt-px w-[96px] border-r border-b-2 border-[#808080] bg-[#f2f2f2] pb-1 font-medium">全部默认</button>
    </div>
  </div>
);

/* ---------- status bar ---------- */

const Rule = ({ className = '' }) => <i className={`h-[37px] w-px shrink-0 bg-[#a9afb1] ${className}`} />;

const Watermark = () => (
  <div className="pointer-events-none absolute right-[14px] bottom-px w-[166px] font-light italic">
    <svg className="absolute -top-[22px] left-[62px]" width="20" height="44" viewBox="0 0 20 44" aria-hidden="true">
      <path d="M3 42C11 32 13 20 1 9c8 4 12 12 11 19C15 18 12 8 4 0c13 9 19 25 10 35-2 3-5 7-7 8z" fill="#ff6633" />
    </svg>
    <div className="flex justify-between text-[40px] leading-[44px]"><span className="text-[#ff6633]">野火</span><span className="text-black">论坛</span></div>
    <div className="-mt-px pl-1 font-['Liberation_Sans',sans-serif] text-[18px] leading-5 font-normal text-[#858585]">www.proewildfire.cn</div>
  </div>
);

const StatusBar = () => (
  <footer className="relative flex h-[47px] shrink-0 border-t border-[#a9b8b8] bg-[#f6fafc]">
    <div className="flex w-[774px] items-center gap-[6px] pt-2 pl-[7px]">
      <IconButton label="模型树" className="h-[27px] w-[27px] border border-[#adadad] bg-[#dfe0e2] pl-1"><TreeIcon /></IconButton>
      <IconButton label="浏览器"><GlobeIcon /></IconButton>
      <IconButton label="全屏" className="ml-1"><Svg><path d="M1 1h18v18H1z" fill="url(#paper)" stroke="#2d7fa3" /></Svg></IconButton>
      <i className="ml-2 h-[27px] w-px bg-[#a9afb1]" />
    </div>
    <div className="flex flex-1 items-center gap-[10px] pb-1">
      <Rule className="-mr-[3px]" />
      <IconButton label="重新调整"><Lens kind="fit" /></IconButton>
      <IconButton label="放大"><Lens kind="in" /></IconButton>
      <IconButton label="缩小"><Lens kind="out" /></IconButton>
      <IconButton label="重画"><RepaintIcon /></IconButton>
      <IconButton label="渲染" className="gap-2"><ShadeIcon /><Caret /></IconButton>
      <IconButton label="显示样式" className="gap-2"><StyleCubeIcon /><Caret /></IconButton>
      <IconButton label="已保存方向" className="gap-2"><SavedViewIcon /><Caret /></IconButton>
      <IconButton label="视图管理器"><ViewMgrIcon /></IconButton>
      <IconButton label="视图法向"><CubeArrow1 /></IconButton>
      <IconButton label="定向"><CubeArrow2 /></IconButton>
      <IconButton label="透视图"><PerspIcon /></IconButton>
      <IconButton label="基准显示过滤器" className="gap-2"><DatumFilterIcon /><Caret /></IconButton>
      <IconButton label="平面显示"><PlaneIcon eye /></IconButton>
      <IconButton label="轴显示"><AxisIcon eye /></IconButton>
      <IconButton label="点显示"><PointEyeIcon /></IconButton>
      <IconButton label="坐标系显示"><CsysIcon eye /></IconButton>
      <IconButton label="注释显示" className="-mx-[5px] h-[30px] w-[30px] border border-[#adb0b2] bg-[#dfe0e2]"><AnnoEyeIcon /></IconButton>
      <IconButton label="旋转中心"><SpinIcon /></IconButton>
      <IconButton label="模型"><GreyPartIcon /></IconButton>
      <Rule className="ml-[27px]" />
      <Rule className="ml-[38px]" />
      <IconButton label="查找" className="-mx-2 h-[30px] w-[52px] border border-[#c3c7ca] bg-[#fcfcfd]">
        <span className="flex h-full w-[33px] items-center justify-center border-r border-[#c3c7ca]"><BinocularIcon /></span>
        <span className="flex flex-1 justify-center"><Caret /></span>
      </IconButton>
      <Rule />
    </div>
    <div className="flex items-center pr-5">
      <div className="relative flex h-7 w-[218px] border border-[#b3b6b8]">
        <select aria-label="选择过滤器" className="w-full appearance-none bg-[#f8f9fa] pl-2 outline-none"><option>几何</option></select>
        <span className="pointer-events-none absolute inset-y-0 right-0 flex w-[20px] items-center justify-center border-l border-[#b3b6b8]"><Caret /></span>
      </div>
    </div>
    <svg className="absolute right-[3px] bottom-[3px]" width="14" height="14" viewBox="0 0 14 14" aria-hidden="true"><path d="M1 13L13 1M5 13l8-8M9 13l4-4" stroke="#b5b9bb" strokeWidth="2" /></svg>
    <Watermark />
  </footer>
);

const App = () => {
  const [tab, setTab] = useState('注释');

  return (
    <div className="relative flex h-screen flex-col border-b border-[#555] bg-[#a2a2a2] p-[5px] pb-1 font-['Noto_Sans','Noto_Sans_CJK_SC',sans-serif] text-[15px] leading-5 text-[#3d3d3d]">
      <Defs />
      <TitleBar />
      <TabBar active={tab} onPick={setTab} />
      <Ribbon />
      <QuickBar />
      <div className="flex min-h-0 flex-1">
        <Navigator />
        <main className="flex min-w-0 flex-1 flex-col">
          <div className="flex min-h-0 flex-1 flex-col bg-linear-to-b from-[#005e9e] to-[#00102f]"><ModelView /></div>
          <SheetBar />
        </main>
      </div>
      <StatusBar />
      {/* battery meter floating over the title bar */}
      <div className="absolute top-[2px] right-[264px] flex h-[11px] w-[71px] gap-px rounded-[4px] border border-[#e3e3e3] bg-[#505454] py-px pl-[2px]">
        {[0, 1, 2, 3, 4, 5].map((n) => <i key={n} className="w-[2px] bg-[#52dd6a]" />)}
      </div>
    </div>
  );
};

export default App;
